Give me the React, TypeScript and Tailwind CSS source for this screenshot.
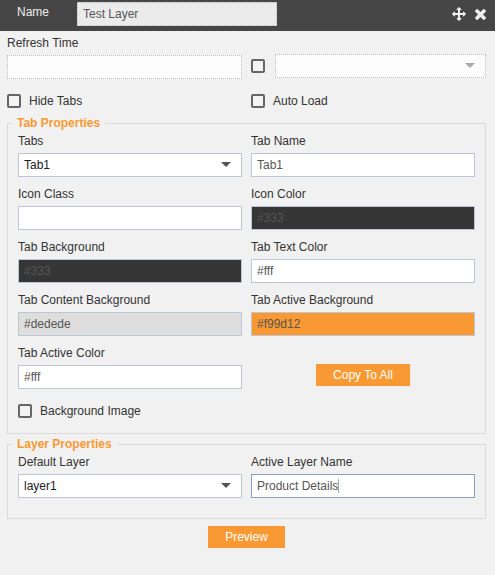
import { useId, useState } from 'react';
import type { ReactNode } from 'react';

const inputBase = 'block h-6 w-full rounded-none border px-[5px] text-xs text-[#555] outline-none';

function TextField({ label, value, look = 'border-[#bcc6d6] bg-white' }: { label: string; value: string; look?: string }) {
  const id = useId();
  return (
    <div className="flex flex-col gap-1">
      <label htmlFor={id} className="leading-4">{label}</label>
      <input id={id} type="text" defaultValue={value} className={`${inputBase} ${look}`} />
    </div>
  );
}

function Arrow({ color }: { color: string }) {
  return (
    <svg viewBox="0 0 10 5" className={`pointer-events-none absolute top-[9px] right-[11px] h-[5px] w-2.5 ${color}`} fill="currentColor">
      <path d="M0 0h10L5 5z" />
    </svg>
  );
}

function SelectField({ label, value }: { label: string; value: string }) {
  const id = useId();
  return (
    <div className="flex flex-col gap-1">
      <label htmlFor={id} className="leading-4">{label}</label>
      <div className="relative">
        <select id={id} defaultValue={value} className="block h-6 w-full appearance-none border border-[#bcc6d6] bg-white px-[5px] text-xs text-[#222] outline-none">
          <option value={value}>{value}</option>
        </select>
        <Arrow color="text-[#555]" />
      </div>
    </div>
  );
}

const boxClass = 'size-3.5 shrink-0 appearance-none rounded-[2px] border-2 border-[#666] bg-[#f3f3f3] checked:bg-[#f99933]';

function CheckField({ label }: { label: string }) {
  return (
    <label className="flex items-center gap-2 leading-4">
      <input type="checkbox" className={boxClass} />
      {label}
    </label>
  );
}

function Group({ title, className, children }: { title: string; className: string; children: ReactNode }) {
  return (
    <fieldset className={`min-w-0 border border-[#dadada] px-2.5 ${className}`}>
      <legend className="-ml-1.5 px-[5px] leading-[15px] font-bold text-[#f99933]">{title}</legend>
      {children}
    </fieldset>
  );
}

const orangeButton = 'h-[22px] bg-[#f99933] px-[17px] text-xs leading-4 text-white';

export default function App() {
  const [layerName, setLayerName] = useState('Product Details');
  return (
    <main className="min-h-screen bg-[#f1f1f1] font-['Liberation_Sans',Arial,sans-serif] text-xs text-[#333]">
      <header className="flex h-[31px] items-start bg-[#464646] pt-0.5 pr-[9px] pl-[17px] text-[#eee]">
        <label htmlFor="name" className="w-15 pt-0.5 leading-4">Name</label>
        <input id="name" type="text" defaultValue="Test Layer" className="h-6 w-50 border border-dotted border-[#bbb] bg-[#ebebeb] px-[5px] text-[#555] outline-none" />
        <div className="ml-auto flex h-6 items-center gap-[9px]">
          <button type="button" aria-label="Move">
            <svg viewBox="0 0 1792 1792" className="block size-3.5" fill="currentColor">
              <path d="M1792 896q0 26-19 45l-256 256q-19 19-45 19t-45-19-19-45v-128h-384v384h128q26 0 45 19t19 45-19 45l-256 256q-19 19-45 19t-45-19l-256-256q-19-19-19-45t19-45 45-19h128v-384h-384v128q0 26-19 45t-45 19-45-19l-256-256q-19-19-19-45t19-45l256-256q19-19 45-19t45 19 19 45v128h384v-384h-128q-26 0-45-19t-19-45 19-45l256-256q19-19 45-19t45 19l256 256q19 19 19 45t-19 45-45 19h-128v384h384v-128q0-26 19-45t45-19 45 19l256 256q19 19 19 45z" />
            </svg>
          </button>
          <button type="button" aria-label="Close">
            <svg viewBox="302 366 1188 1188" className="block size-[11px]" fill="currentColor">
              <path d="M1490 1322q0 40-28 68l-136 136q-28 28-68 28t-68-28l-294-294-294 294q-28 28-68 28t-68-28l-136-136q-28-28-28-68t28-68l294-294-294-294q-28-28-28-68t28-68l136-136q28-28 68-28t68 28l294 294 294-294q28-28 68-28t68 28l136 136q28 28 28 68t-28 68l-294 294 294 294q28 28 28 68z" />
            </svg>
          </button>
        </div>
      </header>

      <form className="pt-1 pr-[9px] pb-4 pl-[7px]" onSubmit={(e) => e.preventDefault()}>
        <div className="grid grid-cols-2 items-end gap-x-[9px]">
          <TextField label="Refresh Time" value="" look="border-dotted border-[#bbb] bg-[#fdfdfd]" />
          <div className="flex items-center gap-2.5 pb-px">
            <input type="checkbox" aria-label="Enable" className={boxClass} />
            <div className="relative flex-1">
              <select aria-label="Source" className="block h-6 w-full appearance-none border border-dotted border-[#bbb] bg-[#fdfdfd] px-[5px] outline-none">
                <option value=""></option>
              </select>
              <Arrow color="text-[#aaa]" />
            </div>
          </div>
        </div>

        <div className="mt-3.5 grid grid-cols-2 gap-x-[9px]">
          <CheckField label="Hide Tabs" />
          <CheckField label="Auto Load" />
        </div>

        <Group title="Tab Properties" className="mt-[7px] pb-3.5">
          <div className="mt-0.5 grid grid-cols-2 gap-[9px]">
            <SelectField label="Tabs" value="Tab1" />
            <TextField label="Tab Name" value="Tab1" />
            <TextField label="Icon Class" value="" />
            <TextField label="Icon Color" value="#333" look="border-[#bcc6d6] bg-[#363636]" />
            <TextField label="Tab Background" value="#333" look="border-[#bcc6d6] bg-[#363636]" />
            <TextField label="Tab Text Color" value="#fff" />
            <TextField label="Tab Content Background" value="#dedede" look="border-[#bcc6d6] bg-[#dedede]" />
            <TextField label="Tab Active Background" value="#f99d12" look="border-[#bcc6d6] bg-[#f99933]" />
            <TextField label="Tab Active Color" value="#fff" />
            <div className="flex items-end justify-center pb-[3px]">
              <button type="button" className={orangeButton}>Copy To All</button>
            </div>
          </div>
          <div className="mt-3.5 flex">
            <CheckField label="Background Image" />
          </div>
        </Group>

        <Group title="Layer Properties" className="mt-[3px] pb-5">
          <div className="mt-0.5 grid grid-cols-2 gap-[9px]">
            <SelectField label="Default Layer" value="layer1" />
            <div className="flex flex-col gap-1">
              <label htmlFor="layer-name" className="leading-4">Active Layer Name</label>
              <div className="relative">
                <input id="layer-name" type="text" value={layerName} onChange={(e) => setLayerName(e.target.value)} className={`${inputBase} border-[#8f9dbd] bg-white`} />
                <span className="absolute top-[5px] left-[87px] h-3.5 w-px bg-[#aaa]" />
              </div>
            </div>
          </div>
        </Group>

        <div className="mt-[7px] flex justify-center">
          <button type="submit" className={orangeButton}>Preview</button>
        </div>
      </form>
    </main>
  );
}
